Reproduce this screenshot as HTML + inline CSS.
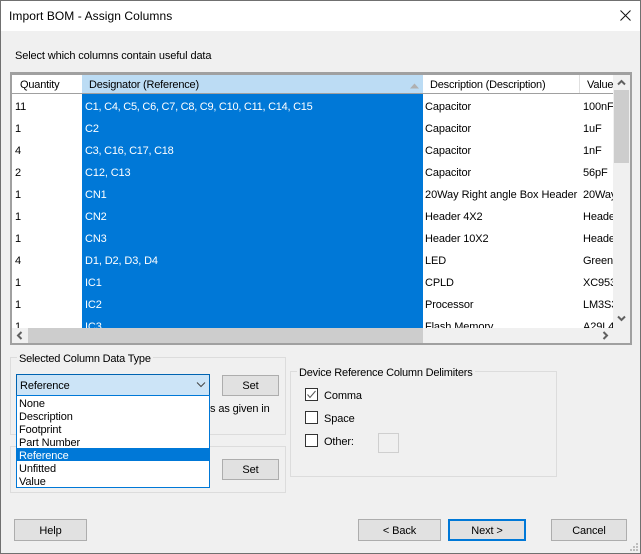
<!DOCTYPE html>
<html><head><meta charset="utf-8"><style>
html,body{margin:0;padding:0;background:#f0f0f0;}
#w{position:relative;width:641px;height:554px;overflow:hidden;background:#f0f0f0;font:11px "Liberation Sans",sans-serif;letter-spacing:-0.12px;color:#000;}
#w div{position:absolute;box-sizing:border-box;}
.t{white-space:nowrap;line-height:14px;margin-top:1px;}
.h{letter-spacing:-0.2px;}
.b{background:#e1e1e1;border:1px solid #adadad;text-align:center;line-height:20px;white-space:nowrap;}
.bb{padding-top:1px;}
.g{border:1px solid #dcdcdc;}
.l{background:#f0f0f0;padding:0 2px;white-space:nowrap;line-height:14px;letter-spacing:-0.2px;margin-top:1px;}
.c{width:13px;height:13px;background:#fff;border:1px solid #333;}
.w{color:#fff;}
</style></head><body><div id="w">
<div style="left:0;top:0;width:641px;height:554px;border:1px solid #707070;"></div>
<div style="left:1px;top:1px;width:639px;height:30px;background:#fff;"></div>
<div class="t" style="left:9px;top:9px;margin-top:0;font-size:12px;letter-spacing:0.07px;">Import BOM - Assign Columns</div>
<svg style="position:absolute;left:620px;top:10px" width="12" height="12"><path d="M0.5 0.5L10.5 10.5M10.5 0.5L0.5 10.5" stroke="#111" stroke-width="1" fill="none"/></svg>
<div class="t" style="left:15px;top:48px;">Select which columns contain useful data</div>

<div style="left:10px;top:72px;width:622px;height:273px;border:2px solid #a0a0a0;border-top-width:3px;background:#fff;"></div>
<div style="left:82px;top:75px;width:341px;height:18px;background:#bcdcf4;"></div>
<div style="left:423px;top:75px;width:191px;height:18px;background:#fff;"></div>
<div style="left:12px;top:93px;width:602px;height:1px;background:#a0a0a0;"></div>
<div style="left:579px;top:75px;width:1px;height:18px;background:#e0e0e0;"></div>
<div style="left:82px;top:94px;width:341px;height:234px;background:#0078d7;"></div>
<svg style="position:absolute;left:409px;top:82px" width="12" height="8"><path d="M1 6.5L5.5 1.5L10 6.5Z" fill="#b0b0b0"/></svg>
<div class="t h" style="left:20px;top:77px;">Quantity</div>
<div class="t h" style="left:89px;top:77px;">Designator (Reference)</div>
<div class="t h" style="left:430px;top:77px;">Description (Description)</div>
<div class="t h" style="left:587px;top:77px;width:27px;overflow:hidden;">Value</div>

<div class="t" style="left:15px;top:99px;">11</div><div class="t w" style="left:85px;top:99px;letter-spacing:-0.26px;">C1, C4, C5, C6, C7, C8, C9, C10, C11, C14, C15</div><div class="t" style="left:425px;top:99px;">Capacitor</div><div class="t" style="left:583px;top:99px;width:31px;overflow:hidden;">100nF</div>
<div class="t" style="left:15px;top:121px;">1</div><div class="t w" style="left:85px;top:121px;">C2</div><div class="t" style="left:425px;top:121px;">Capacitor</div><div class="t" style="left:583px;top:121px;">1uF</div>
<div class="t" style="left:15px;top:143px;">4</div><div class="t w" style="left:85px;top:143px;letter-spacing:-0.26px;">C3, C16, C17, C18</div><div class="t" style="left:425px;top:143px;">Capacitor</div><div class="t" style="left:583px;top:143px;">1nF</div>
<div class="t" style="left:15px;top:165px;">2</div><div class="t w" style="left:85px;top:165px;">C12, C13</div><div class="t" style="left:425px;top:165px;">Capacitor</div><div class="t" style="left:583px;top:165px;">56pF</div>
<div class="t" style="left:15px;top:187px;">1</div><div class="t w" style="left:85px;top:187px;">CN1</div><div class="t" style="left:425px;top:187px;letter-spacing:-0.05px;">20Way Right angle Box Header</div><div class="t" style="left:583px;top:187px;width:31px;overflow:hidden;">20Way</div>
<div class="t" style="left:15px;top:209px;">1</div><div class="t w" style="left:85px;top:209px;">CN2</div><div class="t" style="left:425px;top:209px;">Header 4X2</div><div class="t" style="left:583px;top:209px;width:31px;overflow:hidden;">Header</div>
<div class="t" style="left:15px;top:231px;">1</div><div class="t w" style="left:85px;top:231px;">CN3</div><div class="t" style="left:425px;top:231px;">Header 10X2</div><div class="t" style="left:583px;top:231px;width:31px;overflow:hidden;">Header</div>
<div class="t" style="left:15px;top:253px;">4</div><div class="t w" style="left:85px;top:253px;">D1, D2, D3, D4</div><div class="t" style="left:425px;top:253px;">LED</div><div class="t" style="left:583px;top:253px;">Green</div>
<div class="t" style="left:15px;top:275px;">1</div><div class="t w" style="left:85px;top:275px;">IC1</div><div class="t" style="left:425px;top:275px;">CPLD</div><div class="t" style="left:583px;top:275px;width:31px;overflow:hidden;">XC9536</div>
<div class="t" style="left:15px;top:297px;">1</div><div class="t w" style="left:85px;top:297px;">IC2</div><div class="t" style="left:425px;top:297px;">Processor</div><div class="t" style="left:583px;top:297px;width:31px;overflow:hidden;">LM3S3</div>
<div class="t" style="left:15px;top:319px;">1</div><div class="t w" style="left:85px;top:319px;">IC3</div><div class="t" style="left:425px;top:319px;">Flash Memory</div><div class="t" style="left:583px;top:319px;width:31px;overflow:hidden;">A29L4</div>

<div style="left:613px;top:75px;width:17px;height:253px;background:#f0f0f0;"></div>
<div style="left:614px;top:90px;width:15px;height:73px;background:#cdcdcd;"></div>
<svg style="position:absolute;left:616px;top:78px" width="12" height="9"><path d="M2 6.5L5.5 3L9 6.5" stroke="#606060" stroke-width="2" fill="none"/></svg>
<svg style="position:absolute;left:616px;top:314px" width="12" height="9"><path d="M2 2.5L5.5 6L9 2.5" stroke="#606060" stroke-width="2" fill="none"/></svg>
<div style="left:12px;top:328px;width:618px;height:15px;background:#f0f0f0;"></div>
<div style="left:28px;top:328px;width:395px;height:15px;background:#cdcdcd;"></div>
<svg style="position:absolute;left:15px;top:330px" width="9" height="12"><path d="M6.5 2L3 5.5L6.5 9" stroke="#606060" stroke-width="2" fill="none"/></svg>
<svg style="position:absolute;left:601px;top:330px" width="9" height="12"><path d="M2.5 2L6 5.5L2.5 9" stroke="#606060" stroke-width="2" fill="none"/></svg>

<div class="g" style="left:10px;top:357px;width:276px;height:78px;"></div>
<div class="l" style="left:17px;top:351px;">Selected Column Data Type</div>
<div class="g" style="left:10px;top:446px;width:276px;height:47px;"></div>
<div class="b" style="left:222px;top:375px;width:57px;height:21px;">Set</div>
<div class="b" style="left:222px;top:459px;width:57px;height:21px;">Set</div>
<div class="t" style="left:210px;top:401px;">s as given in</div>

<div style="left:16px;top:374px;width:194px;height:22px;background:#cce4f7;border:1px solid #0063b1;"></div>
<div class="t" style="left:20px;top:378px;">Reference</div>
<svg style="position:absolute;left:195px;top:381px" width="12" height="8"><path d="M2 1.5L6 5.5L10 1.5" stroke="#444" stroke-width="1" fill="none"/></svg>
<div style="left:16px;top:395px;width:194px;height:93px;background:#fff;border:1px solid #0078d7;"></div>
<div style="left:17px;top:448px;width:192px;height:13px;background:#0078d7;"></div>
<div class="t" style="left:19px;top:396px;">None</div>
<div class="t" style="left:19px;top:409px;">Description</div>
<div class="t" style="left:19px;top:422px;">Footprint</div>
<div class="t" style="left:19px;top:435px;">Part Number</div>
<div class="t w" style="left:19px;top:448px;">Reference</div>
<div class="t" style="left:19px;top:461px;">Unfitted</div>
<div class="t" style="left:19px;top:474px;">Value</div>

<div class="g" style="left:290px;top:371px;width:267px;height:106px;"></div>
<div class="l" style="left:297px;top:365px;">Device Reference Column Delimiters</div>
<div class="c" style="left:305px;top:388px;"></div>
<svg style="position:absolute;left:305px;top:388px" width="13" height="13"><path d="M2.5 6.5L5 9.5L10.5 3" stroke="#555" stroke-width="1" fill="none"/></svg>
<div class="t" style="left:324px;top:388px;">Comma</div>
<div class="c" style="left:305px;top:411px;"></div>
<div class="t" style="left:324px;top:411px;">Space</div>
<div class="c" style="left:305px;top:434px;"></div>
<div class="t" style="left:324px;top:434px;">Other:</div>
<div style="left:378px;top:433px;width:21px;height:20px;background:#f0f0f0;border:1px solid #cfcfcf;"></div>

<div class="b bb" style="left:14px;top:519px;width:73px;height:22px;">Help</div>
<div class="b bb" style="left:358px;top:519px;width:83px;height:22px;">&lt; Back</div>
<div class="b bb" style="left:448px;top:519px;width:78px;height:22px;border:2px solid #0078d7;line-height:18px;">Next &gt;</div>
<div class="b bb" style="left:551px;top:519px;width:76px;height:22px;">Cancel</div>
<svg style="position:absolute;left:629px;top:542px" width="11" height="11"><path d="M7 1h2v2h-2zM4 4h2v2h-2zM7 4h2v2h-2zM1 7h2v2h-2zM4 7h2v2h-2zM7 7h2v2h-2z" fill="#bdbdbd"/></svg>
</div></body></html>
